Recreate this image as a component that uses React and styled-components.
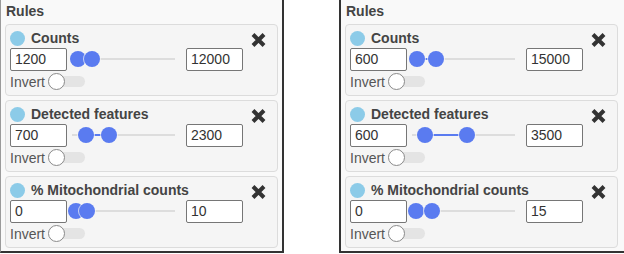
import React from 'react';
import styled, { createGlobalStyle } from 'styled-components';

const GlobalStyle = createGlobalStyle`
  body {
    margin: 0;
    background: #ffffff;
    font-family: 'Liberation Sans', Arial, sans-serif;
  }
`;

const Page = styled.div`
  display: flex;
  gap: 55px;
  width: 624px;
  height: 254px;
  overflow: hidden;
`;

const Panel = styled.div`
  box-sizing: border-box;
  width: ${(p) => (p.$last ? '285px' : '284px')};
  height: 253px;
  background: #f9f9f9;
  border-left: ${(p) => (p.$last ? '2px solid #333' : '1px solid #9a9a9a')};
  border-right: ${(p) => (p.$last ? 'none' : '2px solid #333')};
  border-bottom: 2px solid #333;
  padding: 3px 3px 0 4px;
`;

const Heading = styled.div`
  font-size: 14px;
  line-height: 16px;
  font-weight: bold;
  color: #444;
  padding-left: 1px;
  margin-bottom: 5px;
`;

const CardList = styled.div`
  display: flex;
  flex-direction: column;
  gap: 4px;
`;

const Card = styled.div`
  box-sizing: border-box;
  width: 273px;
  height: 72px;
  background: #f5f5f5;
  border: 1px solid #dcdcdc;
  border-radius: 4px;
  padding: 4px 0 5px 4px;
`;

const Header = styled.div`
  display: flex;
  align-items: center;
  height: 18px;
`;

const Dot = styled.span`
  width: 15px;
  height: 15px;
  border-radius: 50%;
  background: #8ccbe8;
  margin-right: 6px;
`;

const Title = styled.span`
  font-size: 14px;
  font-weight: bold;
  color: #444;
  flex: 1;
`;

const Remove = styled.svg`
  align-self: flex-start;
  margin-top: 3px;
  margin-right: 10px;
`;

const Controls = styled.div`
  display: flex;
  align-items: center;
  margin-top: 1px;
  height: 23px;
`;

const NumberBox = styled.div`
  box-sizing: border-box;
  width: 57px;
  height: 23px;
  border: 1px solid #767676;
  border-radius: 2px;
  background: #fff;
  padding: 0 4px;
  font-size: 14px;
  line-height: 21px;
  color: #333;
`;

const Slider = styled.div`
  position: relative;
  width: 119px;
  height: 23px;
`;

const Track = styled.div`
  position: absolute;
  left: 5px;
  right: 11px;
  top: 10px;
  height: 2px;
  background: #dddddd;
`;

const Fill = styled.div`
  position: absolute;
  top: 10px;
  height: 2px;
  background: #5a7bf0;
`;

const Thumb = styled.div`
  position: absolute;
  top: 3px;
  width: 16px;
  height: 16px;
  margin-left: -8px;
  border-radius: 50%;
  background: #5a7bf0;
  box-shadow: 0 0 0 1px rgba(245, 245, 245, 0.7);
`;

const InvertRow = styled.div`
  display: flex;
  align-items: center;
  margin-top: 2px;
  height: 17px;
`;

const Label = styled.span`
  font-size: 14px;
  color: #555;
  margin-right: 3px;
`;

const Switch = styled.div`
  position: relative;
  width: 37px;
  height: 17px;
`;

const SwitchTrack = styled.div`
  position: absolute;
  left: 0;
  right: 0;
  top: 3px;
  height: 11px;
  border-radius: 6px;
  background: #e4e4e4;
`;

const Knob = styled.div`
  position: absolute;
  left: 0;
  top: 0;
  box-sizing: border-box;
  width: 17px;
  height: 17px;
  border-radius: 50%;
  background: #fff;
  border: 1px solid #8a8a8a;
`;

const pos = (v, max) => 9 + (v / max) * 94;

const RangeSlider = ({ low, high, max }) => {
  const a = pos(low, max);
  const b = pos(high, max);
  return (
    <Slider>
      <Track />
      <Fill style={{ left: a, width: b - a }} />
      <Thumb style={{ left: a }} />
      <Thumb style={{ left: b }} />
    </Slider>
  );
};

const Rule = ({ title, low, high, max }) => (
  <Card>
    <Header>
      <Dot />
      <Title>{title}</Title>
      <Remove width="17" height="16" viewBox="0 0 17 16">
        <path d="M3 2.5 L14 13.5 M14 2.5 L3 13.5" stroke="#333" strokeWidth="4" />
      </Remove>
    </Header>
    <Controls>
      <NumberBox>{low}</NumberBox>
      <RangeSlider low={low} high={high} max={max} />
      <NumberBox>{high}</NumberBox>
    </Controls>
    <InvertRow>
      <Label>Invert</Label>
      <Switch>
        <SwitchTrack />
        <Knob />
      </Switch>
    </InvertRow>
  </Card>
);

const panels = [
  [
    { title: 'Counts', low: 1200, high: 12000, max: 70500 },
    { title: 'Detected features', low: 700, high: 2300, max: 6480 },
    { title: '% Mitochondrial counts', low: 0, high: 10, max: 87 },
  ],
  [
    { title: 'Counts', low: 600, high: 15000, max: 70500 },
    { title: 'Detected features', low: 600, high: 3500, max: 6480 },
    { title: '% Mitochondrial counts', low: 0, high: 15, max: 87 },
  ],
];

const App = () => (
  <>
    <GlobalStyle />
    <Page>
      {panels.map((rules, i) => (
        <Panel key={i} $last={i === panels.length - 1}>
          <Heading>Rules</Heading>
          <CardList>
            {rules.map((r) => (
              <Rule key={r.title} {...r} />
            ))}
          </CardList>
        </Panel>
      ))}
    </Page>
  </>
);

export default App;
